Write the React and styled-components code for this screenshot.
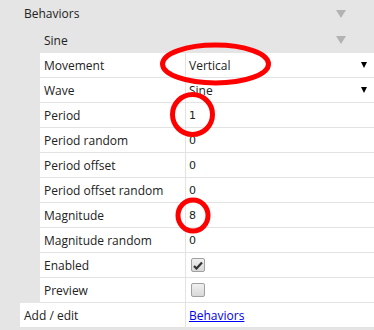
import styled, { createGlobalStyle } from "styled-components";

const GlobalStyle = createGlobalStyle`
  html, body {
    margin: 0;
    padding: 0;
    background: #e5e5e5;
  }
  body {
    font-family: "Open Sans", "Noto Sans", sans-serif;
    font-size: 12px;
    color: #222;
  }
`;

const Panel = styled.div`
  position: relative;
  width: 374px;
  height: 330px;
  background: #e5e5e5;
  overflow: hidden;
`;

const GroupHeader = styled.div`
  display: flex;
  align-items: center;
  justify-content: space-between;
  height: ${(p) => (p.$level === 1 ? 27 : 26)}px;
  padding-left: ${(p) => (p.$level === 1 ? 24 : 44)}px;
  padding-right: 28px;
`;

const Collapse = styled.span`
  width: 0;
  height: 0;
  border-left: 5px solid transparent;
  border-right: 5px solid transparent;
  border-top: 8px solid #b3b3b3;
`;

const Row = styled.div`
  display: grid;
  grid-template-columns: ${(p) => (p.$indent ? 146 : 166)}px 186px;
  margin-left: ${(p) => (p.$indent ? 40 : 20)}px;
  height: 25px;
  background: #fff;
  box-sizing: border-box;
  border-bottom: 1px solid #e3e3e3;
`;

const Label = styled.div`
  display: flex;
  align-items: center;
  padding-left: 4px;
  border-right: 1px solid #e3e3e3;
  white-space: nowrap;
`;

const Value = styled.div`
  display: flex;
  align-items: center;
  justify-content: space-between;
  padding: 0 5px 0 3px;
  white-space: nowrap;
  font-family: ${(p) => (p.$num ? '"DejaVu Sans", sans-serif' : "inherit")};
  font-size: ${(p) => (p.$num ? 11 : 12)}px;
`;

const DropArrow = styled.span`
  width: 0;
  height: 0;
  border-left: 3px solid transparent;
  border-right: 3px solid transparent;
  border-top: 6px solid #000;
`;

const Check = styled.span`
  display: inline-flex;
  align-items: center;
  justify-content: center;
  width: 12px;
  height: 12px;
  margin-left: 2px;
  border: 1px solid #a0a0a0;
  border-radius: 2px;
  background: linear-gradient(#f0f0f0, #d8d8d8);
`;

const Link = styled.a`
  color: #0000ee;
  text-decoration: underline;
  cursor: pointer;
`;

const Marks = styled.svg`
  position: absolute;
  left: 0;
  top: 0;
  pointer-events: none;
`;

const props = [
  { name: "Movement", value: "Vertical", select: true },
  { name: "Wave", value: "Sine", select: true },
  { name: "Period", value: "1", num: true },
  { name: "Period random", value: "0", num: true },
  { name: "Period offset", value: "0", num: true },
  { name: "Period offset random", value: "0", num: true },
  { name: "Magnitude", value: "8", num: true },
  { name: "Magnitude random", value: "0", num: true },
  { name: "Enabled", check: true, checked: true },
  { name: "Preview", check: true, checked: false },
];

const renderValue = (p) => {
  if (p.check) {
    return (
      <Check>
        {p.checked && (
          <svg width="10" height="9" viewBox="0 0 10 9">
            <path d="M1 5 L3.5 7.5 L9 1.5" stroke="#333" strokeWidth="2.2" fill="none" />
          </svg>
        )}
      </Check>
    );
  }
  return (
    <>
      <span>{p.value}</span>
      {p.select && <DropArrow />}
    </>
  );
};

const App = () => {
  return (
    <Panel>
      <GlobalStyle />
      <GroupHeader $level={1}>
        <span>Behaviors</span>
        <Collapse />
      </GroupHeader>
      <GroupHeader $level={2}>
        <span>Sine</span>
        <Collapse />
      </GroupHeader>
      {props.map((p) => (
        <Row $indent key={p.name}>
          <Label>{p.name}</Label>
          <Value $num={p.num}>{renderValue(p)}</Value>
        </Row>
      ))}
      <Row>
        <Label>Add / edit</Label>
        <Value>
          <Link>Behaviors</Link>
        </Value>
      </Row>
      <Marks width="374" height="330">
        <ellipse cx="215.5" cy="64" rx="53" ry="19" stroke="#f00" strokeWidth="5" fill="none" />
        <ellipse cx="192.5" cy="114.5" rx="20" ry="20" stroke="#f00" strokeWidth="5" fill="none" />
        <ellipse cx="193" cy="215.5" rx="15" ry="15.5" stroke="#f00" strokeWidth="5" fill="none" />
      </Marks>
    </Panel>
  );
};

export default App;
